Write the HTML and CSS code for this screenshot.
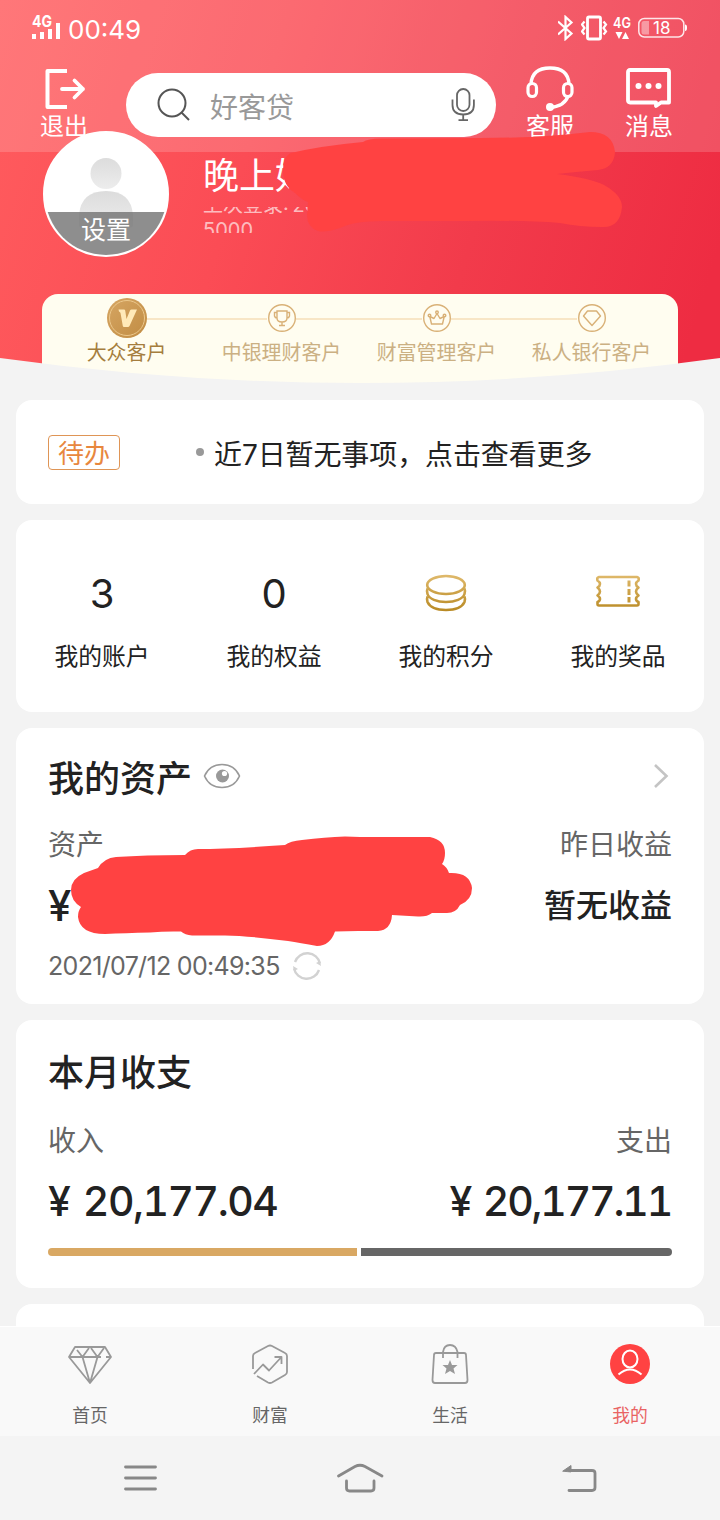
FILE: index.html
```html
<!DOCTYPE html>
<html lang="zh-CN">
<head>
<meta charset="utf-8">
<title>我的</title>
<link rel="stylesheet" href="styles.css">
</head>
<body>
<div class="screen">
  <header class="hero">
    <div class="topbar">
      <div class="status">
        <svg class="signal" width="30" height="28" viewBox="0 0 30 28"><g fill="#fff"><text class="net" x="0" y="12" textLength="20" lengthAdjust="spacingAndGlyphs">4G</text><rect x="0" y="19" width="4" height="5"/><rect x="8" y="17" width="4" height="7"/><rect x="16" y="14" width="4" height="10"/><rect x="24" y="8" width="4" height="16"/></g></svg>
        <span class="clock">00:49</span>
        <div class="status-icons">
          <svg width="18" height="26" viewBox="0 0 18 26" fill="none" stroke="#fff" stroke-width="2.200"><path d="M0 6.500L13.500 18.500L7.500 24V2L13.500 7.500L0 19.500"/></svg>
          <svg width="27" height="26" viewBox="0 0 27 26" fill="none" stroke="#fff" stroke-width="2.200"><rect x="6.500" y="2" width="13" height="22" rx="1.500" stroke-width="2.800"/><path d="M3.500 6.500L1 9.500L3.500 13L1 16.500L3.500 19.500M22.500 6.500L25 9.500L22.500 13L25 16.500L22.500 19.500"/></svg>
          <svg class="signal" width="20" height="26" viewBox="0 0 20 26" fill="#fff"><text class="net net-small" x="0" y="13" textLength="18" lengthAdjust="spacingAndGlyphs">4G</text><path d="M2.500 17h7L6 24zM9 24h7L12.500 17z"/></svg>
          <svg width="50" height="26" viewBox="0 0 50 26"><rect x=".8" y="3.500" width="45" height="18.500" rx="5.500" fill="none" stroke="#fff" stroke-opacity=".85" stroke-width="1.500"/><path d="M6 6h5v13.500h-5q-2.500 0-2.500-2.500v-8.500q0-2.500 2.500-2.500z" fill="#fff" fill-opacity=".4"/><path d="M47 9.500q2 0 2 3.200t-2 3.200z" fill="#fff"/><text class="charge" x="15" y="18.500" fill="#fff">18</text></svg>
        </div>
      </div>
      <div class="toolbar">
        <div class="tool tool-exit">
          <svg width="44" height="44" viewBox="0 0 44 44" fill="none" stroke="#fff" stroke-width="4" stroke-linecap="round" stroke-linejoin="round"><path d="M25 4H5.500V40H25" stroke-linecap="butt"/><path d="M20 22H41M32.500 13.500L41 22L32.500 30.500" stroke-width="3.800"/></svg>
          <span>退出</span>
        </div>
        <div class="search">
          <svg width="34" height="34" viewBox="0 0 34 34" fill="none" stroke="#555" stroke-width="2"><circle cx="15" cy="15" r="13.500"/><path d="M24.500 24.500L32 32"/></svg>
          <span>好客贷</span>
          <svg class="mic" width="24" height="36" viewBox="0 0 24 36" fill="none" stroke="#666" stroke-width="1.800"><rect x="6" y="2" width="12.500" height="22" rx="6.200"/><path d="M1.500 12.500V18Q1.500 27.500 12.200 27.500T22.900 18V12.500M12.200 27.500V33M7.500 33.200H17"/></svg>
        </div>
        <div class="tool tool-help">
          <svg width="50" height="46" viewBox="0 0 50 46" fill="none" stroke="#fff" stroke-width="3.200"><path d="M6 18Q7 2 25 2T44 18M43 30Q40 40 25 41.500" stroke-width="3.400"/><rect x="3" y="17.500" width="8.500" height="13" rx="4.200"/><rect x="38.500" y="17.500" width="8.500" height="13" rx="4.200"/><circle cx="25" cy="41" r="4" fill="#fff" stroke="none"/></svg>
          <span>客服</span>
        </div>
        <div class="tool tool-news">
          <svg width="46" height="42" viewBox="0 0 46 42"><path d="M4 2H41Q43 2 43 4V34.500H35L30 38V34.500H4Q2 34.500 2 32.500V4Q2 2 4 2Z" fill="none" stroke="#fff" stroke-width="3.800" stroke-linejoin="round"/><g fill="#fff"><circle cx="12.500" cy="18" r="3"/><circle cx="22.500" cy="18" r="3"/><circle cx="32.500" cy="18" r="3"/></g></svg>
          <span>消息</span>
        </div>
      </div>
    </div>

    <div class="profile">
      <div class="avatar">
        <svg width="122" height="122" viewBox="0 0 122 122"><defs><linearGradient id="person" x1="0" y1="0" x2="0" y2="1"><stop offset="0" stop-color="#dcdcdc"/><stop offset="1" stop-color="#ededed"/></linearGradient></defs><circle cx="61" cy="40.500" r="15.500" fill="url(#person)"/><path d="M34 92V82Q36 58 61 58T88 82V92Q88 95 83 95H39Q34 95 34 92Z" fill="url(#person)"/></svg>
        <span>设置</span>
      </div>
      <div class="greeting">
        <div class="hello">晚上好</div>
        <div class="last-login"><div>上次登录: 20</div><div>5000</div></div>
      </div>
    </div>

    <div class="levels">
      <div class="level level-on">
        <svg width="40" height="40" viewBox="0 0 40 40"><defs><linearGradient id="medal" x1="0" y1="0" x2="1" y2="1"><stop offset="0" stop-color="#d6a663"/><stop offset="1" stop-color="#c18c43"/></linearGradient></defs><circle cx="20" cy="20" r="20" fill="url(#medal)"/><circle cx="20" cy="20" r="17.500" fill="none" stroke="#ecc88c" stroke-width="1"/><path d="M11.500 11.500H17Q18 11.500 18.200 12.500L19.500 21L23 12.500Q23.500 11.500 24.500 11.500H30L22.500 28Q22 29 21 29H17Q16 29 15.800 28L13.500 15Q13.300 14 12 13.500Z" fill="#ffe9b8"/></svg>
        <span>大众客户</span>
      </div>
      <div class="level">
        <svg width="40" height="40" viewBox="0 0 40 40" fill="none" stroke="#d9b177" stroke-width="1.400"><circle cx="20" cy="20" r="13.300"/><path d="M15 13H25V20Q25 24 20 24T15 20ZM15 14.500H12.500V18Q13 20 15 20M25 14.500H27.500V18Q27 20 25 20M20 24V27.500M17 27.500H23"/></svg>
        <span>中银理财客户</span>
      </div>
      <div class="level">
        <svg width="40" height="40" viewBox="0 0 40 40" fill="none" stroke="#d9b177" stroke-width="1.400" stroke-linejoin="round"><circle cx="20" cy="20" r="13.300"/><path d="M14.500 26L12.800 18.500L17 20.500L20 15.500L23 20.500L27.200 18.500L25.500 26Z"/><circle cx="12.500" cy="17.500" r="1.300"/><circle cx="20" cy="14.300" r="1.300"/><circle cx="27.500" cy="17.500" r="1.300"/></svg>
        <span>财富管理客户</span>
      </div>
      <div class="level">
        <svg width="40" height="40" viewBox="0 0 40 40" fill="none" stroke="#d9b177" stroke-width="1.400" stroke-linejoin="round"><circle cx="20" cy="20" r="13.300"/><path d="M15.500 13H24.500L28.500 18L20 27.500L11.500 18Z"/></svg>
        <span>私人银行客户</span>
      </div>
    </div>
    <svg class="curve" width="720" height="30" viewBox="0 0 720 30"><path d="M0 4Q360 54 720 4V30H0Z" fill="#f3f3f3"/></svg>
    <svg class="scribble" width="720" height="384" viewBox="0 0 720 384"><path d="M291 153Q320 146 363 142Q368 138 385 138.500L480 138Q540 138 590 132Q613 132 615 152Q614 168 598 170Q575 172 557 174Q590 178 604 185Q622 195 622 207Q620 228 602 227Q580 227 560 223Q520 220 465 221L390 221Q355 220 340 228Q325 233 318 231Q307 227 307 215L308 202Q302 200 295 193Q283 186 283 170Q283 156 291 153Z" fill="#ff4242"/></svg>
  </header>

  <main class="cards">
    <section class="card todo"><span class="tag">待办</span><i class="dot"></i><span class="todo-text">近7日暂无事项，点击查看更多</span></section>

    <section class="card stats">
      <div class="stat"><b>3</b><span>我的账户</span></div>
      <div class="stat"><b>0</b><span>我的权益</span></div>
      <div class="stat"><svg width="48" height="44" viewBox="0 0 48 44" fill="none" stroke="url(#gold)" stroke-width="2.600"><defs><linearGradient id="gold" gradientUnits="userSpaceOnUse" x1="0" y1="4" x2="0" y2="40"><stop offset="0" stop-color="#dfb96b"/><stop offset="1" stop-color="#b98a24"/></linearGradient></defs><ellipse cx="24" cy="14" rx="18.800" ry="9"/><path d="M5.500 17.500Q4.500 20 5.500 23C7 28 15 31 24 31S41 28 42.500 23Q43.500 20 42.500 17.500M5.500 25.500Q4.500 28 5.500 31C8 36.500 15 39 24 39S40 36.500 42.500 31Q43.500 28 42.500 25.500"/></svg><span>我的积分</span></div>
      <div class="stat"><svg width="48" height="44" viewBox="0 0 48 44" fill="none" stroke="url(#gold)" stroke-width="2.600" stroke-linejoin="round"><path d="M5 6H43Q45.500 6.500 44.500 9.500Q42 11 42 13T44.500 16.500Q42 18.500 42 20.500T44.500 24.500Q42 26 42 28T44.500 31V33Q44.500 34.500 43 34.500H5Q3.500 34.500 3.500 33V31Q6 30 6 28T3.500 24.500Q6 22.500 6 20.500T3.500 16.500Q6 15 6 13T3.500 9.500Q2.500 6.500 5 6Z"/><path d="M35 9.500V15.500M35 18V24M35 26V31.500" stroke-width="3"/></svg><span>我的奖品</span></div>
    </section>

    <section class="card assets">
      <div class="title-row"><h2>我的资产</h2>
        <svg class="eye" width="38" height="26" viewBox="0 0 38 26"><path d="M1.500 13C5 5 12 1.500 19 1.500S33 5 36.500 13C33 21 26 24.500 19 24.500S5 21 1.500 13Z" fill="none" stroke="#999" stroke-width="1.600"/><circle cx="19.500" cy="13" r="6.500" fill="#999"/><circle cx="21.500" cy="10.500" r="2.600" fill="#fff"/></svg>
        <svg class="more" width="16" height="26" viewBox="0 0 16 26" fill="none" stroke="#c4c4c4" stroke-width="2.600"><path d="M2 2L13.500 13L2 24"/></svg>
      </div>
      <div class="pair labels"><span>资产</span><span>昨日收益</span></div>
      <div class="pair values"><span class="yen">¥</span><span class="none">暂无收益</span></div>
      <div class="updated"><span>2021/07/12 00:49:35</span>
        <svg width="30" height="30" viewBox="0 0 30 30" fill="none" stroke="#d2d2d2" stroke-width="2.400"><path d="M2 17.500A13 13 0 0 0 27 19M28 12.500A13 13 0 0 0 3 11"/><path d="M1 15L6 18L2 20ZM29 15L24 12L28 10Z" fill="#d2d2d2" stroke="none"/></svg>
      </div>
      <svg class="scribble" width="688" height="276" viewBox="16 728 688 276"><path d="M71 890Q71 879 84 873L98 868Q104 858 116 857Q145 855 185 855Q190 849 198 849Q230 849 285 845Q290 841 302 840Q325 837 345 836.500L360 837H430Q445 840 445 853Q445 860 442 864Q447 867 449 873Q470 872 472 888Q472 900 460 905Q456 913 447 913L432 913Q427 917 418 916.500L392 915Q391 930 378 931L358 931L335 931.500Q330 946 317 946Q300 943 288 941Q250 936 225 935.500H192Q185 935 181 931.500Q165 931 150 932.500Q125 933 105 934Q80 934 78 917Q78 911 81 907Q71 901 71 890Z" fill="#ff4242"/></svg>
    </section>

    <section class="card monthly">
      <h2>本月收支</h2>
      <div class="pair labels"><span>收入</span><span>支出</span></div>
      <div class="pair money"><span>¥ 20,177.04</span><span class="spent">¥ 20,177.11</span></div>
      <div class="ratio"><i class="in"></i><i class="out"></i></div>
    </section>

    <section class="card peek"></section>
  </main>

  <nav class="tabs">
    <div class="tab"><svg width="46" height="44" viewBox="0 0 46 44" fill="none" stroke="#999" stroke-width="1.800" stroke-linejoin="round"><path d="M8 5H38L44 15L23 41L2 15ZM2 15H34M39 15H44M10 8L15.500 15L22 6M24 6L30.500 15L37 6M15.500 15L23 41L30.500 15"/></svg><span>首页</span></div>
    <div class="tab"><svg width="46" height="44" viewBox="0 0 46 44" fill="none" stroke="#999" stroke-width="1.800" stroke-linejoin="round"><path d="M6 27V14Q6 12 8 11L21 4Q23 3 25 4L38 11Q40 12 40 14V30Q40 32 38 33L25 40.500Q23 41.500 21 40.500L10 34"/><path d="M7 32L16 22.500L22 28.500L34 15.500M27.500 15H34.500V22"/></svg><span>财富</span></div>
    <div class="tab"><svg width="46" height="44" viewBox="0 0 46 44" fill="none" stroke="#999" stroke-width="1.800"><path d="M9 11H37Q39 11 39 13L40.500 38Q40.500 41 38 41H8Q5.500 41 5.500 38L7 13Q7 11 9 11ZM16 16V10Q17 3 23 3T30.500 10V16"/><path d="M23 18L25 23H30.500L26.500 26.500L28 32L23 29L18 32L19.500 26.500L15.500 23H21Z" fill="#999" stroke="none"/></svg><span>生活</span></div>
    <div class="tab tab-on"><svg width="46" height="44" viewBox="0 0 46 44"><circle cx="23" cy="22" r="20" fill="#ff4242"/><g fill="none" stroke="#fff" stroke-width="2"><ellipse cx="23" cy="17" rx="7.500" ry="8.500"/><path d="M11.500 32.500Q23 22.500 34.500 32.500"/></g></svg><span>我的</span></div>
  </nav>
  <div class="softkeys">
    <svg width="36" height="30" viewBox="0 0 36 30" stroke="#888" stroke-width="2.800" stroke-linecap="round"><path d="M2.500 4H32.500M2.500 15H32.500M2.500 26H32.500"/></svg>
    <svg width="50" height="32" viewBox="0 0 50 32" fill="none" stroke="#888" stroke-width="2.800" stroke-linecap="round"><path d="M3.500 14L20 4.500Q25 2 30 4.500L47 14M11.500 19V26Q11.500 29 14.500 29H36Q39 29 39 26V19"/></svg>
    <svg width="38" height="32" viewBox="0 0 38 32" fill="none" stroke="#888" stroke-width="2.800" stroke-linecap="round"><path d="M9 8.500H32Q35 8.500 35 11V25.500Q35 28.500 32 28.500H9"/><path d="M3 9L11 3.500V9.500Z" fill="#888" stroke-width="1"/></svg>
  </div>
</div>
</body>
</html>
```
FILE: styles.css
```css
* { box-sizing: border-box; }
body { margin: 0; background: #f3f3f3; color: #222; font-family: Inter, "Noto Sans CJK SC", sans-serif; }
svg { display: block; flex: none; }
h2 { margin: 0; font-size: 36px; font-weight: 500; line-height: 44px; }
.screen { width: 720px; height: 1520px; display: flex; flex-direction: column; overflow: hidden; }

.hero { position: relative; height: 384px; flex: none; background: linear-gradient(107deg, #ff5c5e 0%, #fb4c55 35%, #f23b4b 65%, #ee2c42 95%); }
.topbar { height: 152px; background: rgba(255, 255, 255, .17); }
.status { height: 56px; padding: 15px 32px 0; display: flex; align-items: flex-start; color: #fff; }
.signal { overflow: visible; }
.net { font-size: 16px; font-weight: 700; }
.net-small { font-size: 15px; font-weight: 600; }
.charge { font-size: 17px; }
.clock { margin-left: 6px; font-size: 26px; line-height: 30px; }
.status-icons { margin-left: auto; display: flex; gap: 5px; }
.toolbar { height: 96px; display: flex; align-items: flex-start; color: #fff; }
.tool { display: flex; flex-direction: column; align-items: center; width: 50px; font-size: 24px; }
.tool svg { height: 46px; margin: 10px 0 0; overflow: visible; }
.tool span { line-height: 28px; height: 28px; margin-top: 1px; white-space: nowrap; }
.tool-exit { margin-left: 39px; }
.search { margin: 17px 0 0 37px; width: 370px; height: 64px; border-radius: 32px; background: #fff; display: flex; align-items: center; padding: 0 21px 0 31px; color: #999; font-size: 28px; }
.search span { margin: 2px 0 0 19px; }
.mic { margin-left: auto; }
.tool-help { margin-left: 29px; }
.tool-news { margin-left: 49px; }

.profile { position: relative; display: flex; margin: -21px 0 0 43px; height: 163px; }
.avatar { position: relative; width: 126px; height: 126px; border-radius: 50%; border: 2px solid #fff; background: #fff; overflow: hidden; flex: none; }
.avatar span { position: absolute; left: 0; right: 0; bottom: 0; height: 43px; background: rgba(110, 110, 110, .78); color: #fff; font-size: 25px; line-height: 37px; text-align: center; }
.greeting { margin: 23px 0 0 34px; color: #fff; }
.hello { font-size: 36px; line-height: 44px; height: 53px; }
.last-login { height: 26px; overflow: hidden; font-size: 20px; line-height: 25px; color: rgba(255, 255, 255, .65); word-spacing: -2px; }
.last-login div { height: 25px; margin-top: -14px; }
.last-login div + div { margin-top: 0; }

.levels { width: 636px; height: 90px; margin: 0 0 0 42px; padding: 4px 7px 0; border-radius: 16px 16px 0 0; background: #fffdf0; display: grid; grid-template-columns: repeat(4, 155px); }
.level { display: flex; flex-direction: column; align-items: center; color: #cbb083; font-size: 19.900px; background: linear-gradient(#f8e6c6, #f8e6c6) 0 20px / 63px 2px no-repeat, linear-gradient(#f8e6c6, #f8e6c6) 100% 20px / 63px 2px no-repeat; }
.level:first-child { color: #a57d3e; background-position: -80px 20px, 100% 20px; }
.level:last-child { background-position: 0 20px, 300px 20px; }
.level span { line-height: 28px; margin-top: 1px; white-space: nowrap; }
.curve { position: absolute; left: 0; bottom: 0; }
.scribble { position: absolute; left: 0; top: 0; }

.cards { height: 942px; padding: 16px 16px 0; display: flex; flex-direction: column; gap: 16px; flex: none; }
.card { position: relative; background: #fff; border-radius: 16px; flex: none; }
.todo { height: 104px; padding: 0 32px; display: flex; align-items: center; }
.tag { width: 72px; height: 35px; border: 1.500px solid #df9556; border-radius: 4px; color: #e8873e; font-size: 26px; line-height: 35px; text-align: center; }
.dot { width: 8px; height: 8px; border-radius: 50%; background: #999; margin-left: 76px; }
.todo-text { margin: 2px 0 0 10px; font-size: 28px; letter-spacing: -.1px; white-space: nowrap; }

.stats { height: 192px; display: grid; grid-template-columns: repeat(4, 1fr); }
.stat { display: flex; flex-direction: column; align-items: center; padding-top: 51px; font-size: 23.800px; }
.stat b { height: 44px; font-size: 40px; line-height: 46px; font-weight: 400; }
.stat span { margin-top: 27px; line-height: 30px; }

.assets { height: 276px; padding: 29px 32px 0; }
.title-row { display: flex; align-items: center; height: 44px; }
.eye { margin: -7px 0 0 11px; }
.more { margin: -6px 3px 0 auto; }
.pair { display: flex; justify-content: space-between; }
.labels { margin-top: 26px; height: 36px; font-size: 28px; line-height: 36px; color: #666; }
.values { margin-top: 21px; height: 44px; line-height: 44px; font-size: 42px; font-weight: 500; }
.yen { font-feature-settings: "tnum"; }
.none { font-size: 32px; }
.updated { margin-top: 21px; height: 34px; display: flex; align-items: center; gap: 12px; color: #666; font-size: 25px; letter-spacing: -.68px; }

.monthly { height: 268px; padding: 31px 32px 0; }
.monthly .labels { margin-top: 28px; }
.money { margin-top: 18px; height: 48px; line-height: 48px; font-size: 41px; font-weight: 450; font-feature-settings: "tnum"; letter-spacing: -1.500px; word-spacing: 4px; }
.spent { letter-spacing: -2.200px; padding-right: 1px; }
.ratio { margin-top: 23px; display: flex; gap: 4px; height: 8px; }
.ratio i { border-radius: 4px 0 0 4px; background: #d9a863; width: 309px; }
.ratio .out { border-radius: 0 4px 4px 0; background: #666; width: 311px; }
.peek { height: 22px; border-radius: 16px 16px 0 0; }

.tabs { height: 110px; border-top: 1px solid #fff; background: #f9f9f9; display: grid; grid-template-columns: repeat(4, 1fr); flex: none; }
.tab { display: flex; flex-direction: column; align-items: center; padding-top: 15px; color: #666; font-size: 17.800px; }
.tab span { margin-top: 18px; line-height: 24px; }
.tab-on { color: #e96363; }
.softkeys { height: 84px; background: #f4f4f4; display: flex; justify-content: space-between; align-items: center; padding: 0 122px 0 123px; flex: none; }
```
